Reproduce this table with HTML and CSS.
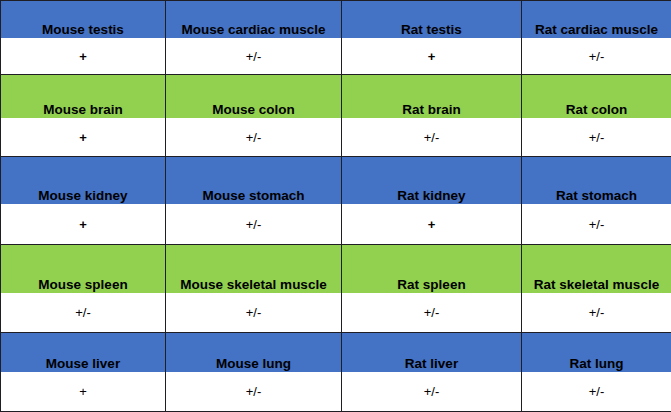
FILE: index.html
```html
<!DOCTYPE html>
<html>
<head>
<meta charset="utf-8">
<link rel="stylesheet" href="styles.css">
</head>
<body>
<div class="table">
  <div class="row head blue"><div class="cell">Mouse testis</div><div class="cell">Mouse cardiac muscle</div><div class="cell">Rat testis</div><div class="cell">Rat cardiac muscle</div></div>
  <div class="row body"><div class="cell strong">+</div><div class="cell">+/-</div><div class="cell strong">+</div><div class="cell">+/-</div></div>
  <div class="row head green"><div class="cell">Mouse brain</div><div class="cell">Mouse colon</div><div class="cell">Rat brain</div><div class="cell">Rat colon</div></div>
  <div class="row body"><div class="cell strong">+</div><div class="cell">+/-</div><div class="cell">+/-</div><div class="cell">+/-</div></div>
  <div class="row head blue"><div class="cell">Mouse kidney</div><div class="cell">Mouse stomach</div><div class="cell">Rat kidney</div><div class="cell">Rat stomach</div></div>
  <div class="row body"><div class="cell strong">+</div><div class="cell">+/-</div><div class="cell strong">+</div><div class="cell">+/-</div></div>
  <div class="row head green"><div class="cell">Mouse spleen</div><div class="cell">Mouse skeletal muscle</div><div class="cell">Rat spleen</div><div class="cell">Rat skeletal muscle</div></div>
  <div class="row body"><div class="cell">+/-</div><div class="cell">+/-</div><div class="cell">+/-</div><div class="cell">+/-</div></div>
  <div class="row head blue"><div class="cell">Mouse liver</div><div class="cell">Mouse lung</div><div class="cell">Rat liver</div><div class="cell">Rat lung</div></div>
  <div class="row body last"><div class="cell">+</div><div class="cell">+/-</div><div class="cell">+/-</div><div class="cell">+/-</div></div>
</div>
</body>
</html>
```
FILE: styles.css
```css
html, body {
  margin: 0;
  padding: 0;
  background: #ffffff;
  overflow: hidden;
}
.table {
  width: 671px;
  font-family: "Liberation Sans", Arial, sans-serif;
  color: #000;
}
.row {
  display: grid;
  grid-template-columns: 166px 176px 180px 149px;
  box-sizing: border-box;
}
.cell {
  box-sizing: border-box;
  border-right: 1px solid #1e1e24;
  display: flex;
  justify-content: center;
  text-align: center;
  white-space: nowrap;
}
.cell:first-child {
  border-left: 1px solid #1e1e24;
}
.cell:last-child {
  border-right: none;
}
.head {
  border-top: 1px solid #1e1e24;
  font-weight: bold;
  font-size: 13.5px;
  line-height: 16px;
}
.head .cell {
  align-items: flex-end;
  padding-bottom: 0;
}
.body {
  font-size: 13px;
  line-height: 16px;
}
.body .cell {
  align-items: center;
  padding-top: 1px;
}
.body .strong {
  font-weight: bold;
}
.blue { background: #4472c4; }
.green { background: #92d050; }
.last { border-bottom: 1px solid #1e1e24; }

.row:nth-child(1) { height: 38px; }
.row:nth-child(2) { height: 36px; }
.row:nth-child(3) { height: 44px; }
.row:nth-child(4) { height: 38px; }
.row:nth-child(5) { height: 48px; }
.row:nth-child(6) { height: 40px; }
.row:nth-child(7) { height: 49px; }
.row:nth-child(8) { height: 39px; }
.row:nth-child(9) { height: 40px; }
.row:nth-child(10) { height: 40px; }
```
